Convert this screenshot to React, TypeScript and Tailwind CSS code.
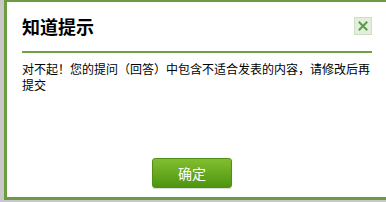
import React from 'react';

const App: React.FC = () => {
  return (
    <div className="w-[386px] h-[202px] bg-[#c8c8c8] overflow-hidden" style={{ fontFamily: '"Noto Sans CJK SC", "Noto Sans", sans-serif' }}>
      {/* Dialog */}
      <div className="ml-[4px] w-[400px] h-[200px] bg-white border-t-2 border-l-[3px] border-b-[3px] border-[#6c9b42]">
        <div className="w-[365px] pl-[15px]">
          {/* Header */}
          <div className="flex items-start justify-between pt-[12px] h-[49px]">
            <h1 className="text-[18px] leading-[24px] font-bold text-black">知道提示</h1>
            <button className="mt-[3px] w-[18px] h-[18px] flex items-center justify-center bg-[#e3efda] border border-[#cde0c1]">
              <svg width="10" height="10" viewBox="0 0 10 10">
                <path d="M1.5 1.5 L8.5 8.5 M8.5 1.5 L1.5 8.5" stroke="#5e9a4c" strokeWidth="2" strokeLinecap="square" />
              </svg>
            </button>
          </div>
          <div className="h-[2px] bg-[#6fa245]" />

          {/* Message */}
          <p className="mt-[8px] text-[12px] leading-[16px] text-black">
            对不起！您的提问（回答）中包含不适合发表的内容，请修改后再提交
          </p>

          {/* Action */}
          <div className="mt-[65px] pl-[130px]">
            <button className="w-[80px] h-[30px] rounded-[3px] bg-gradient-to-b from-[#82bf2f] to-[#4d950e] border border-[#4f8f16] text-white text-[14px] leading-[28px] shadow-[0_1px_1px_rgba(0,0,0,0.15)]">
              确定
            </button>
          </div>
        </div>
      </div>
    </div>
  );
};

export default App;
